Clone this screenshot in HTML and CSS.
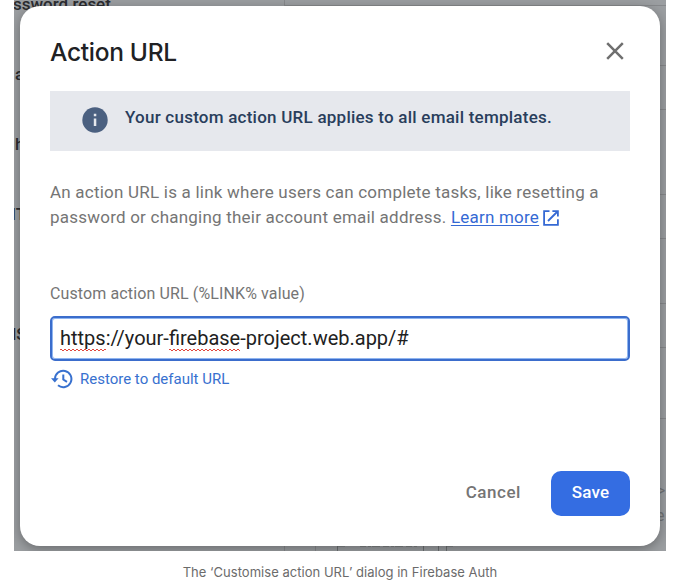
FILE: index.html
```html
<!DOCTYPE html>
<html lang="en">
<head>
<meta charset="utf-8">
<title>Action URL</title>
<link rel="stylesheet" href="styles.css">
</head>
<body>
<figure class="figure">
  <div class="screen">
    <svg class="behind" viewBox="0 0 652 551" aria-hidden="true">
      <g stroke="#87898c" stroke-width="1" fill="none">
        <path d="M270.5 0V551M301.5 545V551M270 5.5H652M640 65.5H652M640 109.5H652M640 194.5H652M640 238.5H652M640 303.5H652M640 347.5H652M640 418.5H652"/>
        <path d="M323.5 551V546H331M409.5 546V551M424.5 546V551M432.5 551V546H439" stroke="#6d7073"/>
        <path d="M346 546H404" stroke="#65686b" stroke-dasharray="6 2 3 1 8 3"/>
      </g>
      <g class="behind-text">
        <text x="-1" y="10">ssword reset</text>
        <text x="1" y="80">a</text>
        <text x="1" y="150">h</text>
        <text x="-13" y="220">MT</text>
        <text x="-12.6" y="340">MS</text>
      </g>
      <g class="behind-code">
        <text x="643" y="496">&gt;</text>
        <text x="642" y="521">e</text>
      </g>
    </svg>
    <section class="dialog">
      <header class="dialog-head">
        <h1 class="title">Action URL</h1>
        <svg class="close" viewBox="0 0 20 20"><path d="M2.2 2.2 17.8 17.8M17.8 2.2 2.2 17.8"/></svg>
      </header>
      <div class="notice">
        <svg class="info" viewBox="0 0 26 26"><circle cx="13" cy="13" r="12.7"/><path d="M11.8 6.7h2.5v2.6h-2.5zM11.8 11.6h2.5v7.5h-2.5z"/></svg>
        <span class="notice-text">Your custom action URL applies to all email templates.</span>
      </div>
      <p class="description">An action URL is a link where users can complete tasks, like resetting a<br>password or changing their account email address. <a class="learn">Learn more</a><svg class="external" viewBox="0 0 16 16"><path d="M6.5 1.1H1.1V14.9H14.9V9.2M9.4 1.1H14.9V6.6M14.5 1.5 5 11"/></svg></p>
      <div class="label">Custom action URL (%LINK% value)</div>
      <div class="field"><span class="typo">https</span>://your-<span class="typo">firebase</span>-project.web.app/#</div>
      <div class="restore">
        <svg class="history" viewBox="0 0 23 20"><path class="ring" d="M4 10A8.2 8.2 0 1 1 7 16.3M12.3 5.5V10.5L16 12.8"/><path class="arrow" d="M0 9.2H7.6L3.8 13.6Z"/></svg>
        <span>Restore to default URL</span>
      </div>
      <footer class="actions">
        <span class="cancel">Cancel</span>
        <span class="save">Save</span>
      </footer>
    </section>
  </div>
  <figcaption class="caption">The ‘Customise action URL’ dialog in Firebase Auth</figcaption>
</figure>
</body>
</html>
```

FILE: styles.css
```css
* { box-sizing: border-box; }
body { margin: 0; background: #fff; font-family: Roboto, sans-serif; overflow: hidden; }
.figure { margin: 0; width: 680px; height: 581px; }
.screen {
  position: relative;
  margin: 0 14px;
  height: 551px;
  padding: 6px;
  background: #9b9ea1;
  overflow: hidden;
}
.behind { position: absolute; left: 0; top: 0; width: 652px; height: 551px; }
.behind-text { font-size: 17px; font-weight: 500; fill: #2b2c2f; }
.behind-code { font-size: 16px; fill: #717477; }
.dialog {
  position: relative;
  width: 640px;
  height: 540px;
  padding: 30px;
  border-radius: 20px;
  background: #fff;
  box-shadow: 0 3px 12px rgba(0, 0, 0, .32);
}
.dialog-head { display: flex; justify-content: space-between; height: 55px; }
.title {
  margin: 0;
  font: 500 24.5px/33px Inter, sans-serif;
  letter-spacing: -.3px;
  color: #202124;
}
.close { width: 20px; height: 20px; margin: 5px 5px 0 0; fill: none; stroke: #6f6f6f; stroke-width: 2.5; }
.notice {
  display: flex;
  height: 60px;
  padding: 16px 32px;
  background: #e6e8ed;
}
.info { width: 26px; height: 26px; flex: none; }
.info circle { fill: #4b6080; }
.info path { fill: #e6e8ed; }
.notice-text {
  margin-left: 17px;
  font-size: 17px;
  line-height: 20px;
  font-weight: 500;
  letter-spacing: .235px;
  color: #293e5c;
  white-space: nowrap;
}
.description {
  margin: 29px 0 0;
  height: 50px;
  font-size: 17px;
  line-height: 25px;
  letter-spacing: .22px;
  color: #757575;
  white-space: nowrap;
}
.learn { color: #3569d4; text-decoration: underline; text-underline-offset: 2px; }
.external { width: 16px; height: 16px; margin-left: 4px; vertical-align: -3px; fill: none; stroke: #3569d4; stroke-width: 1.8; }
.label { margin-top: 53px; height: 33px; font-size: 16px; line-height: 22px; letter-spacing: .12px; color: #757575; }
.field {
  height: 45px;
  padding: 0 8px;
  border: 2px solid #3b6dcc;
  border-radius: 5px;
  box-shadow: inset 0 0 0 1px #8fb5f0;
  font-size: 20px;
  line-height: 41px;
  color: #212121;
}
.typo {
  padding-bottom: 3px;
  background-image:
    linear-gradient(90deg, #e0483e 50%, transparent 50%),
    linear-gradient(90deg, transparent 50%, #e0483e 50%);
  background-size: 4px 1px;
  background-repeat: repeat-x;
  background-position: 0 calc(100% - 3px), 0 calc(100% - 2px);
}
.restore { display: flex; align-items: center; margin-top: 8px; height: 20px; gap: 6px; font-size: 15px; color: #3871cf; }
.history { width: 23px; height: 20px; margin-left: 1px; }
.ring { fill: none; stroke: #3871cf; stroke-width: 2; }
.arrow { fill: #3871cf; }
.actions { display: flex; justify-content: flex-end; align-items: center; gap: 30px; margin-top: 82px; height: 45px; font-size: 17px; font-weight: 500; }
.cancel { color: #757575; letter-spacing: .55px; line-height: 20px; padding-bottom: 3px; }
.save { width: 79px; height: 45px; border-radius: 10px; background: #346de2; color: #fff; line-height: 43px; text-align: center; letter-spacing: .2px; }
.caption { height: 30px; padding-top: 11px; font: 13px/20px Inter, sans-serif; letter-spacing: .03px; text-align: center; color: #6b6b6b; }
```
